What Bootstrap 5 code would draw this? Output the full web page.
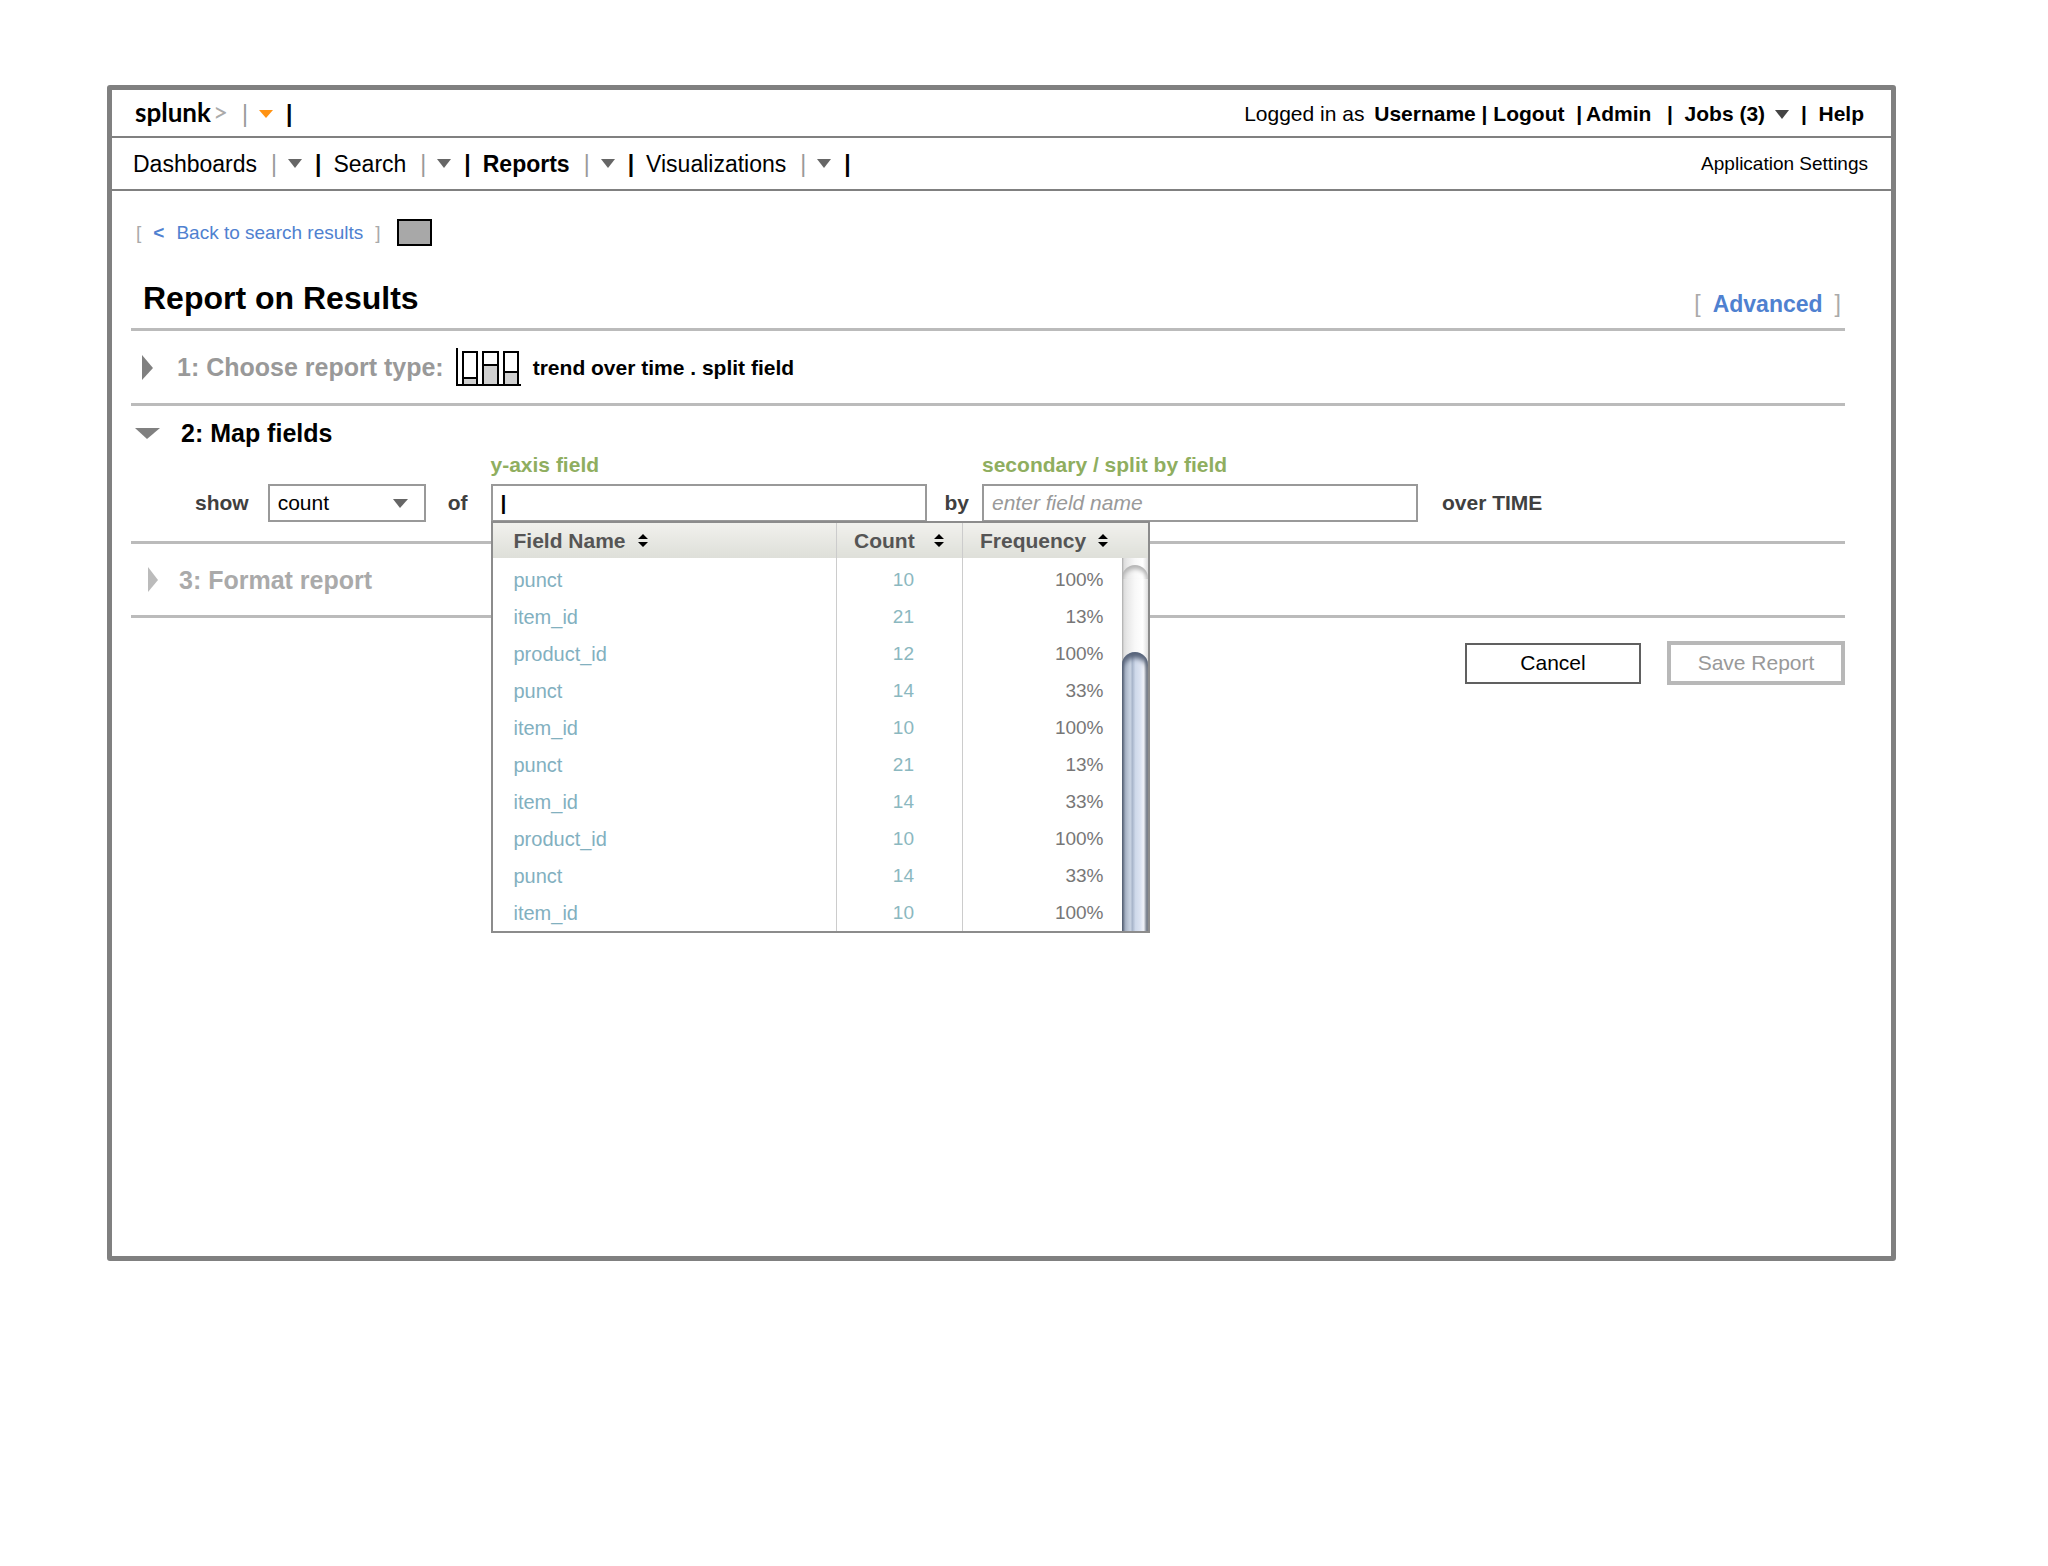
<!DOCTYPE html>
<html lang="en">
<head>
<meta charset="utf-8">
<meta name="viewport" content="width=device-width, initial-scale=1">
<title>Report on Results</title>
<link href="https://cdn.jsdelivr.net/npm/bootstrap@5.3.0/dist/css/bootstrap.min.css" rel="stylesheet">
<style>
  body { font-family: "Liberation Sans", Arial, sans-serif; font-size: 21px; line-height: 30px; color: #000; background: #fff; padding: 85px 152px 48px 107px; }
  a { color: inherit; text-decoration: none; }
  button { color: inherit; }
  svg { display: block; flex-shrink: 0; }
  .app-window { border: 5px solid #808080; border-radius: 3px; min-height: 1176px; }
  .top-bar { height: 48px; border-bottom: 2px solid #808080; padding: 2px 27px 0 23px; }
  .nav-bar { height: 53px; border-bottom: 2px solid #808080; padding: 0 23px 0 21px; font-size: 23px; }
  .logo { font-family: Lato, sans-serif; font-weight: 700; font-size: 26px; padding-bottom: 4px; }
  .logo-mark { color: #aaa; font-weight: 400; margin-left: 2px; }
  .bare { background: none; border: 0; padding: 0; font-weight: inherit; }
  .bar-thin { color: #999; margin-left: 14px; font-size: 23px; }
  .bar-bold { font-weight: 700; margin: 0 12px 0 13px; font-size: 23px; }
  .bar-toggle { margin-left: 11px; }
  .account { white-space: pre; font-weight: 700; }
  .account-plain { font-weight: 400; }
  .settings { font-size: 19px; }
  .page { padding: 28px 46px 28px 19px; }
  .back-row { height: 27px; font-size: 19px; padding-left: 5px; }
  .bracket { color: #aaa; }
  .blue { color: #4f81d0; }
  .swatch { width: 35px; height: 27px; background: #a8a8a8; border: 2px solid #000; margin-left: 16px; }
  .rule-below { border-bottom: 3px solid #bbb; }
  .title-row { margin-top: 33px; padding-bottom: 11px; }
  h1 { font-size: 32px; line-height: 38px; font-weight: 700; margin: 0; padding-left: 12px; }
  .advanced { font-size: 23px; line-height: 26px; padding-right: 4px; }
  h2 { font-size: 25px; line-height: 30px; font-weight: 700; margin: 0; }
  .step-row { height: 75px; }
  .step-last { height: 74px; }
  .step-done { color: #999; }
  .step-next { color: #aaa; }
  .chart-icon { margin-left: 11px; }
  .chart-name { padding: 2px 0 0 12px; }
  .map-step { padding: 12px 0 19px; }
  .map-form { margin-top: 5px; padding-left: 64px; font-weight: 700; color: #404040; }
  .inline-word { line-height: 38px; white-space: nowrap; }
  .word-of { margin: 0 23px 0 22px; }
  .word-by { margin: 0 13px 0 18px; }
  .green { display: block; color: #8fae5f; line-height: 24px; margin-bottom: 7px; white-space: nowrap; }
  .box { display: block; width: 100%; height: 38px; border: 2px solid #999; border-radius: 0; background: #fff; padding: 0 8px; color: #000; line-height: 30px; outline: 0; }
  .box::placeholder { color: #999; font-style: italic; opacity: 1; }
  .field-wide { flex: 0 1 436px; }
  .select-wrap { flex: 0 0 158px; margin-left: 19px; }
  .select-wrap .box { appearance: none; font-weight: 400; }
  .select-arrow { top: 15px; right: 18px; pointer-events: none; }
  .typed { font-weight: 700; }
  .suggest { top: calc(100% - 1px); left: 0; width: 659px; border: 2px solid #8c8c8c; background: #fff; z-index: 5; font-weight: 400; }
  .suggest-table { --bs-table-bg: transparent; table-layout: fixed; font-size: 20px; line-height: 24px; color: #777; }
  .suggest-table > thead th { height: 35px; padding: 0 0 0 17px; font-size: 21px; font-weight: 700; color: #555; background: linear-gradient(#f1f1ed, #dedfd9); border-right: 1px solid #ccc; vertical-align: middle; }
  .suggest-table > tbody td { height: 37px; padding: 0; border-right: 1px solid #ccc; vertical-align: middle; color: #777; }
  .suggest-table > tbody > tr:first-child td { height: 40px; padding-top: 4px; }
  .suggest-table > thead th:first-child, .suggest-table > tbody td:first-child { padding-left: 21px; }
  .suggest-table th:last-child, .suggest-table td:last-child { border-right: 0 !important; }
  .suggest-table a { color: #82b0bf; }
  .suggest-table .num { font-size: 19px; text-align: right; color: #8bb8c0; padding-right: 48px; }
  .suggest-table .pct { font-size: 19px; text-align: right; padding-right: 44px; }
  .gap-sort { gap: 11px; }
  .gap-sort-wide { gap: 18px; }
  .scroll-track { top: 35px; right: 0; bottom: 0; width: 26px; padding-top: 7px; background: linear-gradient(90deg, #aaa, #ddd 8%, #e8e8e8 20%, #f8f8f8 50%, #fff 80%, #ddd); }
  .scroll-cap { height: 14px; border-radius: 13px 13px 0 0; box-shadow: inset 0 4px 4px #b4b4b4; }
  .scroll-thumb { margin-top: 73px; border-radius: 13px 13px 0 0; box-shadow: inset 0 6px 5px #58647a; background: linear-gradient(90deg, #4d5769, #a9b4c6 12%, #c9d3e2 32%, #a8b5ca 40%, #cfd9ea 52%, #dde4f2 72%, #f4f6fb 84%, #8a8f98 95%, #999); }
  .action-row { margin-top: 23px; gap: 26px; }
  .btn-plain { font-size: 21px; line-height: 30px; border-radius: 0; padding: 0; width: 176px; height: 41px; border: 2px solid #606060; color: #000; background: #fff; }
  .btn-faded, .btn-faded:disabled { width: 178px; height: 44px; border: 4px solid #b8b8b8; color: #999; opacity: 1; background: #fff; }
</style>
<script src="https://cdn.jsdelivr.net/npm/bootstrap@5.3.0/dist/js/bootstrap.bundle.min.js"></script>
</head>
<body>
<div class="app-window">
  <header>
    <div class="top-bar d-flex align-items-center justify-content-between">
      <div class="d-flex align-items-center">
        <a href="#" class="logo">splunk<span class="logo-mark">&gt;</span></a>
        <span class="bar-thin">|</span>
        <button type="button" class="bare bar-toggle" aria-label="Choose application"><svg width="14" height="8"><path d="M0 0h14L7 8z" fill="#ff9212"/></svg></button>
        <span class="bar-bold">|</span>
      </div>
      <div class="account d-flex align-items-center"><span class="account-plain me-1">Logged in as </span><span>Username | </span><a href="#">Logout</a><span class="me-1">  |</span><a href="#" class="me-1">Admin</a><span>  |  </span><button type="button" class="bare d-flex align-items-center gap-1">Jobs (3) <svg width="14" height="9"><path d="M0 0h14L7 9z" fill="#444"/></svg></button><span class="ms-2 ps-1">|  </span><a href="#">Help</a></div>
    </div>
    <nav class="nav-bar d-flex align-items-center justify-content-between">
      <div class="d-flex align-items-center">
        <a href="#">Dashboards</a><span class="bar-thin">|</span>
        <button type="button" class="bare bar-toggle" aria-label="Dashboards menu"><svg width="14" height="9"><path d="M0 0h14L7 9z" fill="#666"/></svg></button><span class="bar-bold">|</span>
        <a href="#">Search</a><span class="bar-thin">|</span>
        <button type="button" class="bare bar-toggle" aria-label="Search menu"><svg width="14" height="9"><path d="M0 0h14L7 9z" fill="#666"/></svg></button><span class="bar-bold">|</span>
        <a href="#" class="fw-bold">Reports</a><span class="bar-thin">|</span>
        <button type="button" class="bare bar-toggle" aria-label="Reports menu"><svg width="14" height="9"><path d="M0 0h14L7 9z" fill="#666"/></svg></button><span class="bar-bold">|</span>
        <a href="#">Visualizations</a><span class="bar-thin">|</span>
        <button type="button" class="bare bar-toggle" aria-label="Visualizations menu"><svg width="14" height="9"><path d="M0 0h14L7 9z" fill="#666"/></svg></button><span class="bar-bold">|</span>
      </div>
      <a href="#" class="settings">Application Settings</a>
    </nav>
  </header>

  <main class="page">
    <div class="back-row d-flex align-items-center">
      <span class="bracket">[</span>
      <a href="#" class="blue d-flex ms-2 me-2 px-1"><b class="me-2 pe-1">&lt;</b>Back to search results</a>
      <span class="bracket">]</span>
      <span class="swatch"></span>
    </div>

    <div class="title-row rule-below d-flex justify-content-between align-items-end">
      <h1>Report on Results</h1>
      <div class="advanced d-flex"><span class="bracket">[</span><a href="#" class="blue fw-bold mx-2 px-1">Advanced</a><span class="bracket">]</span></div>
    </div>

    <section class="step-row rule-below d-flex align-items-center">
      <svg width="46" height="25"><path d="M11 0v25l11-12z" fill="#808080"/></svg>
      <h2 class="step-done">1: Choose report type:</h2>
      <svg class="chart-icon" width="66" height="40" viewBox="0 0 66 40">
        <path d="M8 31h14v7H8zM28 18h15v20H28zM49 25h14v13H49z" fill="#d0d0d0"/>
        <path d="M8 38V5h14v33M8 31h14M28 38V5h15v33M28 18h15M49 38V5h14v33M49 25h14" fill="none" stroke="#000" stroke-width="2"/>
        <path d="M2 1v37h64" fill="none" stroke="#000" stroke-width="2"/>
      </svg>
      <strong class="chart-name">trend over time . split field</strong>
    </section>

    <section class="map-step rule-below">
      <div class="d-flex align-items-center">
        <svg width="50" height="11"><path d="M4 0h25L16 11z" fill="#808080"/></svg>
        <h2>2: Map fields</h2>
      </div>
      <form class="map-form d-flex align-items-end">
        <label class="inline-word" for="measure">show</label>
        <div class="select-wrap position-relative">
          <select id="measure" class="box"><option>count</option></select>
          <svg class="select-arrow position-absolute" width="15" height="9"><path d="M0 0h15L7 9z" fill="#666"/></svg>
        </div>
        <span class="inline-word word-of">of</span>
        <div class="field-wide position-relative">
          <label class="green" for="yfield">y-axis field</label>
          <input id="yfield" class="box typed" type="text" value="|">
          <div class="suggest position-absolute">
            <table class="suggest-table table table-borderless mb-0">
              <colgroup><col style="width:344px"><col style="width:126px"><col></colgroup>
              <thead><tr>
                <th scope="col"><button type="button" class="bare d-flex align-items-center gap-sort">Field Name <svg width="12" height="13"><path d="M6 0l5 5H1zM6 13l5-5H1z"/></svg></button></th>
                <th scope="col"><button type="button" class="bare d-flex align-items-center gap-sort-wide">Count <svg width="12" height="13"><path d="M6 0l5 5H1zM6 13l5-5H1z"/></svg></button></th>
                <th scope="col"><button type="button" class="bare d-flex align-items-center gap-sort">Frequency <svg width="12" height="13"><path d="M6 0l5 5H1zM6 13l5-5H1z"/></svg></button></th>
              </tr></thead>
              <tbody>
                <tr><td><a href="#">punct</a></td><td class="num">10</td><td class="pct">100%</td></tr>
                <tr><td><a href="#">item_id</a></td><td class="num">21</td><td class="pct">13%</td></tr>
                <tr><td><a href="#">product_id</a></td><td class="num">12</td><td class="pct">100%</td></tr>
                <tr><td><a href="#">punct</a></td><td class="num">14</td><td class="pct">33%</td></tr>
                <tr><td><a href="#">item_id</a></td><td class="num">10</td><td class="pct">100%</td></tr>
                <tr><td><a href="#">punct</a></td><td class="num">21</td><td class="pct">13%</td></tr>
                <tr><td><a href="#">item_id</a></td><td class="num">14</td><td class="pct">33%</td></tr>
                <tr><td><a href="#">product_id</a></td><td class="num">10</td><td class="pct">100%</td></tr>
                <tr><td><a href="#">punct</a></td><td class="num">14</td><td class="pct">33%</td></tr>
                <tr><td><a href="#">item_id</a></td><td class="num">10</td><td class="pct">100%</td></tr>
              </tbody>
            </table>
            <div class="scroll-track position-absolute d-flex flex-column">
              <div class="scroll-cap"></div>
              <div class="scroll-thumb flex-grow-1"></div>
            </div>
          </div>
        </div>
        <label class="inline-word word-by" for="splitfield">by</label>
        <div class="field-wide">
          <label class="green" for="splitfield">secondary / split by field</label>
          <input id="splitfield" class="box" type="text" placeholder="enter field name">
        </div>
        <span class="inline-word ms-4">over TIME</span>
      </form>
    </section>

    <section class="step-row step-last rule-below d-flex align-items-center">
      <svg width="48" height="25"><path d="M17 0v25l10-12z" fill="#bbb"/></svg>
      <h2 class="step-next">3: Format report</h2>
    </section>

    <div class="action-row d-flex justify-content-end align-items-center">
      <button type="button" class="btn btn-plain">Cancel</button>
      <button type="button" class="btn btn-plain btn-faded" disabled>Save Report</button>
    </div>
  </main>
</div>
</body>
</html>
